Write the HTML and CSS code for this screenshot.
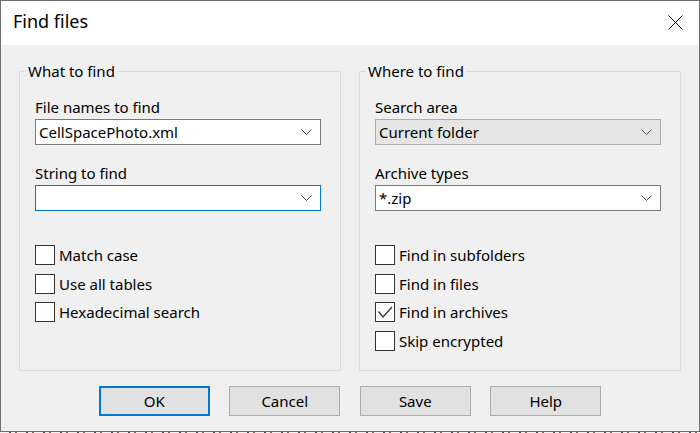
FILE: index.html
```html
<!DOCTYPE html>
<html>
<head>
<meta charset="utf-8">
<link rel="stylesheet" href="styles.css">
</head>
<body>
<div class="window">
  <div class="titlebar">
    <div class="title">Find files</div>
    <svg class="close" width="15" height="15" viewBox="0 0 15 15"><path d="M0.5 0.5 L14.5 14.5 M14.5 0.5 L0.5 14.5" stroke="#000" stroke-width="1" fill="none"/></svg>
  </div>
  <div class="content">
    <div class="groups">
      <fieldset class="group">
        <legend>What to find</legend>
        <div class="field first">
          <div class="label">File names to find</div>
          <div class="combo"><span class="value">CellSpacePhoto.xml</span><svg class="chev" width="11" height="6" viewBox="0 0 11 6"><polyline points="0.5,0.5 5.5,5.5 10.5,0.5" fill="none" stroke="#444" stroke-width="1"/></svg></div>
        </div>
        <div class="field">
          <div class="label">String to find</div>
          <div class="combo focus"><span class="value"></span><svg class="chev" width="11" height="6" viewBox="0 0 11 6"><polyline points="0.5,0.5 5.5,5.5 10.5,0.5" fill="none" stroke="#444" stroke-width="1"/></svg></div>
        </div>
        <div class="checks">
          <div class="check"><span class="box"></span><span>Match case</span></div>
          <div class="check"><span class="box"></span><span>Use all tables</span></div>
          <div class="check"><span class="box"></span><span>Hexadecimal search</span></div>
        </div>
      </fieldset>
      <fieldset class="group">
        <legend>Where to find</legend>
        <div class="field first">
          <div class="label">Search area</div>
          <div class="combo readonly"><span class="value">Current folder</span><svg class="chev" width="11" height="6" viewBox="0 0 11 6"><polyline points="0.5,0.5 5.5,5.5 10.5,0.5" fill="none" stroke="#555" stroke-width="1"/></svg></div>
        </div>
        <div class="field">
          <div class="label">Archive types</div>
          <div class="combo"><span class="value">*.zip</span><svg class="chev" width="11" height="6" viewBox="0 0 11 6"><polyline points="0.5,0.5 5.5,5.5 10.5,0.5" fill="none" stroke="#444" stroke-width="1"/></svg></div>
        </div>
        <div class="checks">
          <div class="check"><span class="box"></span><span>Find in subfolders</span></div>
          <div class="check"><span class="box"></span><span>Find in files</span></div>
          <div class="check"><span class="box"><svg width="18" height="18" viewBox="0 0 18 18"><polyline points="2.5,8.5 7,14 16,4" fill="none" stroke="#333" stroke-width="1.3"/></svg></span><span>Find in archives</span></div>
          <div class="check"><span class="box"></span><span>Skip encrypted</span></div>
        </div>
      </fieldset>
    </div>
    <div class="buttons">
      <div class="btn default">OK</div>
      <div class="btn">Cancel</div>
      <div class="btn">Save</div>
      <div class="btn">Help</div>
    </div>
  </div>
</div>
<div class="under"></div>
</body>
</html>
```
FILE: styles.css
```css
html, body {
  margin: 0;
  padding: 0;
  background: #ffffff;
}
body {
  width: 700px;
  height: 433px;
  overflow: hidden;
  font-family: "Noto Sans", "DejaVu Sans", sans-serif;
  font-size: 15px;
  color: #000;
}
.window {
  width: 700px;
  height: 432px;
  box-sizing: border-box;
  border: 1px solid #6f6f6f;
  display: flex;
  flex-direction: column;
}
.titlebar {
  height: 44px;
  flex: none;
  background: #fff;
  display: flex;
  justify-content: space-between;
  align-items: flex-start;
}
.title {
  font-size: 18px;
  line-height: 24px;
  padding-top: 8px;
  padding-left: 12px;
}
.close {
  margin-top: 14px;
  margin-right: 16px;
}
.content {
  flex: 1;
  background: #f0f0f0;
  padding: 0 18px;
  display: flex;
  flex-direction: column;
}
.groups {
  display: flex;
  gap: 18px;
  margin-top: 16px;
}
.group {
  width: 322px;
  height: 310px;
  box-sizing: border-box;
  margin: 0;
  border: 1px solid #dcdcdc;
  padding: 0 19px 0 15px;
  min-width: 0;
}
.group legend {
  padding: 0 2px;
  margin-left: -9px;
  line-height: 20px;
}
.field {
  display: flex;
  flex-direction: column;
  margin-top: 18px;
}
.field.first {
  margin-top: 16px;
}
.label {
  line-height: 20px;
  margin-bottom: 2px;
}
.combo {
  height: 26px;
  box-sizing: border-box;
  border: 1px solid #7a7a7a;
  background: #fff;
  display: flex;
  align-items: center;
  justify-content: space-between;
  padding: 0 8px 0 3px;
  line-height: 20px;
}
.combo.focus {
  border-color: #0078d7;
}
.combo.readonly {
  background: #e5e5e5;
  border-color: #adadad;
}
.chev {
  display: block;
}
.checks {
  margin-top: 34px;
  display: flex;
  flex-direction: column;
  gap: 8.67px;
}
.check {
  display: flex;
  align-items: center;
  gap: 4px;
  line-height: 20px;
  height: 20px;
}
.box {
  width: 20px;
  height: 20px;
  box-sizing: border-box;
  border: 1px solid #333;
  background: #fff;
  flex: none;
}
.box svg {
  display: block;
}
.buttons {
  display: flex;
  justify-content: center;
  gap: 19.5px;
  margin-top: 15px;
}
.btn {
  width: 111px;
  height: 30px;
  box-sizing: border-box;
  border: 1px solid #adadad;
  background: #e1e1e1;
  display: flex;
  align-items: center;
  justify-content: center;
  line-height: 20px;
}
.btn.default {
  border: 2px solid #0078d7;
}
.under {
  height: 1px;
  background: repeating-linear-gradient(90deg, #f4f4f4 0 9px, #4a4a4a 9px 11px, #f4f4f4 11px 15px, #7a6a50 15px 17px);
}
```
